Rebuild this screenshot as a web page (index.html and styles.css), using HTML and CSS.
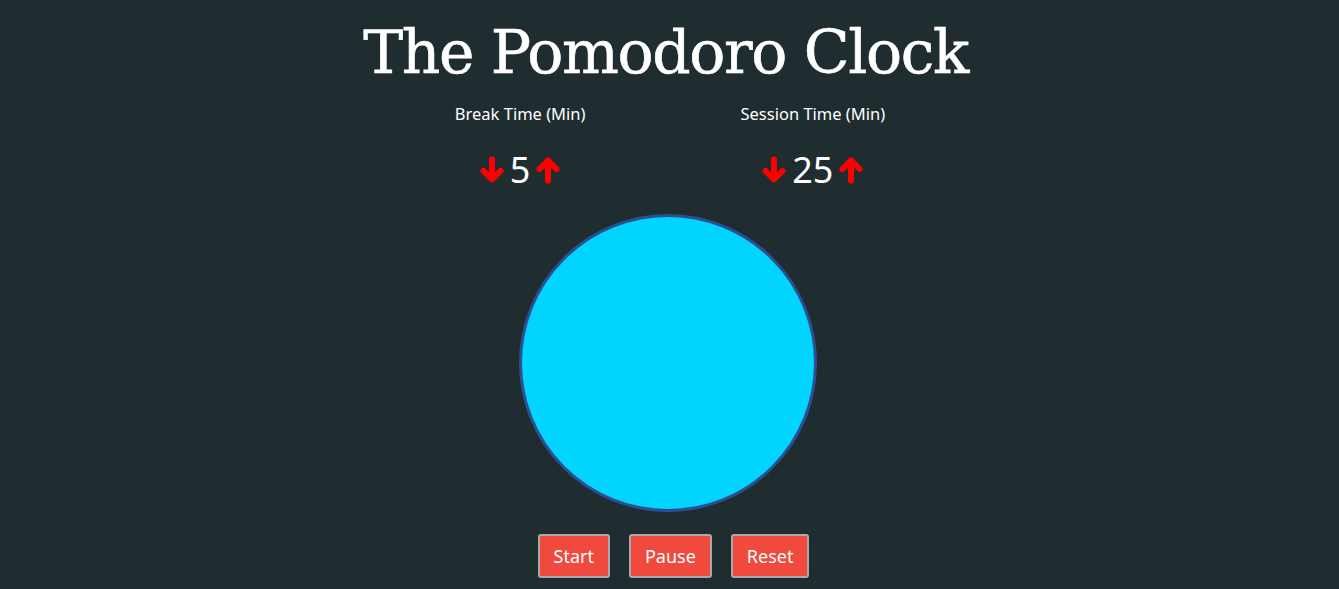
FILE: index.html
```html
<!DOCTYPE html>
<html>
<head>
<meta charset="utf-8">
<title>The Pomodoro Clock</title>
<link rel="stylesheet" href="styles.css">
</head>
<body>
<main class="app">
  <h1 class="title">The Pomodoro Clock</h1>
  <section class="settings">
    <div class="setting">
      <div class="label">Break Time (Min)</div>
      <div class="control">
        <button class="arrow" aria-label="decrease break"><svg viewBox="0 0 24 28" width="24" height="28"><path class="arrow-path" d="M12 3.5V23.5M3.5 15L12 23.5L20.5 15"/></svg></button>
        <span class="value">5</span>
        <button class="arrow" aria-label="increase break"><svg viewBox="0 0 24 28" width="24" height="28"><path class="arrow-path" d="M12 24.5V4.5M3.5 13L12 4.5L20.5 13"/></svg></button>
      </div>
    </div>
    <div class="setting">
      <div class="label">Session Time (Min)</div>
      <div class="control">
        <button class="arrow" aria-label="decrease session"><svg viewBox="0 0 24 28" width="24" height="28"><path class="arrow-path" d="M12 3.5V23.5M3.5 15L12 23.5L20.5 15"/></svg></button>
        <span class="value">25</span>
        <button class="arrow" aria-label="increase session"><svg viewBox="0 0 24 28" width="24" height="28"><path class="arrow-path" d="M12 24.5V4.5M3.5 13L12 4.5L20.5 13"/></svg></button>
      </div>
    </div>
  </section>
  <div class="clock"></div>
  <div class="buttons">
    <button class="btn">Start</button>
    <button class="btn">Pause</button>
    <button class="btn">Reset</button>
  </div>
</main>
</body>
</html>
```

FILE: styles.css
```css
html, body {
  margin: 0;
  padding: 0;
  background: #202d30;
  color: #ffffff;
  height: 100%;
  overflow: hidden;
}

.app {
  display: flex;
  flex-direction: column;
  align-items: center;
  padding-right: 4px;
  font-family: "Noto Sans", "DejaVu Sans", sans-serif;
}

.title {
  font-family: "DejaVu Serif", serif;
  font-weight: normal;
  font-size: 60px;
  letter-spacing: -1.4px;
  line-height: 70px;
  margin: 17px 4px 0 0;
  -webkit-text-stroke: 0.6px #ffffff;
}

.settings {
  display: flex;
  gap: 155px;
  margin-top: 16px;
  margin-left: 5px;
}

.setting {
  display: flex;
  flex-direction: column;
  align-items: center;
}

.label {
  font-size: 16.5px;
  line-height: 22px;
}

.control {
  display: flex;
  align-items: center;
  margin-top: 25px;
  gap: 6px;
}

.arrow {
  background: none;
  border: none;
  padding: 0;
  display: flex;
  cursor: pointer;
}

.arrow-path {
  fill: none;
  stroke: #ff0000;
  stroke-width: 6;
  stroke-linecap: round;
  stroke-linejoin: round;
}

.value {
  font-size: 36px;
  line-height: 40px;
}

.clock {
  width: 292px;
  height: 292px;
  border: 3px solid #2b4f90;
  border-radius: 50%;
  background: #00d4ff;
  margin-top: 24px;
}

.buttons {
  display: flex;
  gap: 19px;
  margin-top: 22px;
  margin-left: 12px;
}

.btn {
  font-family: "Noto Sans", "DejaVu Sans", sans-serif;
  font-size: 18px;
  color: #ffffff;
  background: #f0493d;
  border: 2px solid #a9a9a9;
  border-radius: 3px;
  height: 44px;
  padding: 0 14px;
}
```
